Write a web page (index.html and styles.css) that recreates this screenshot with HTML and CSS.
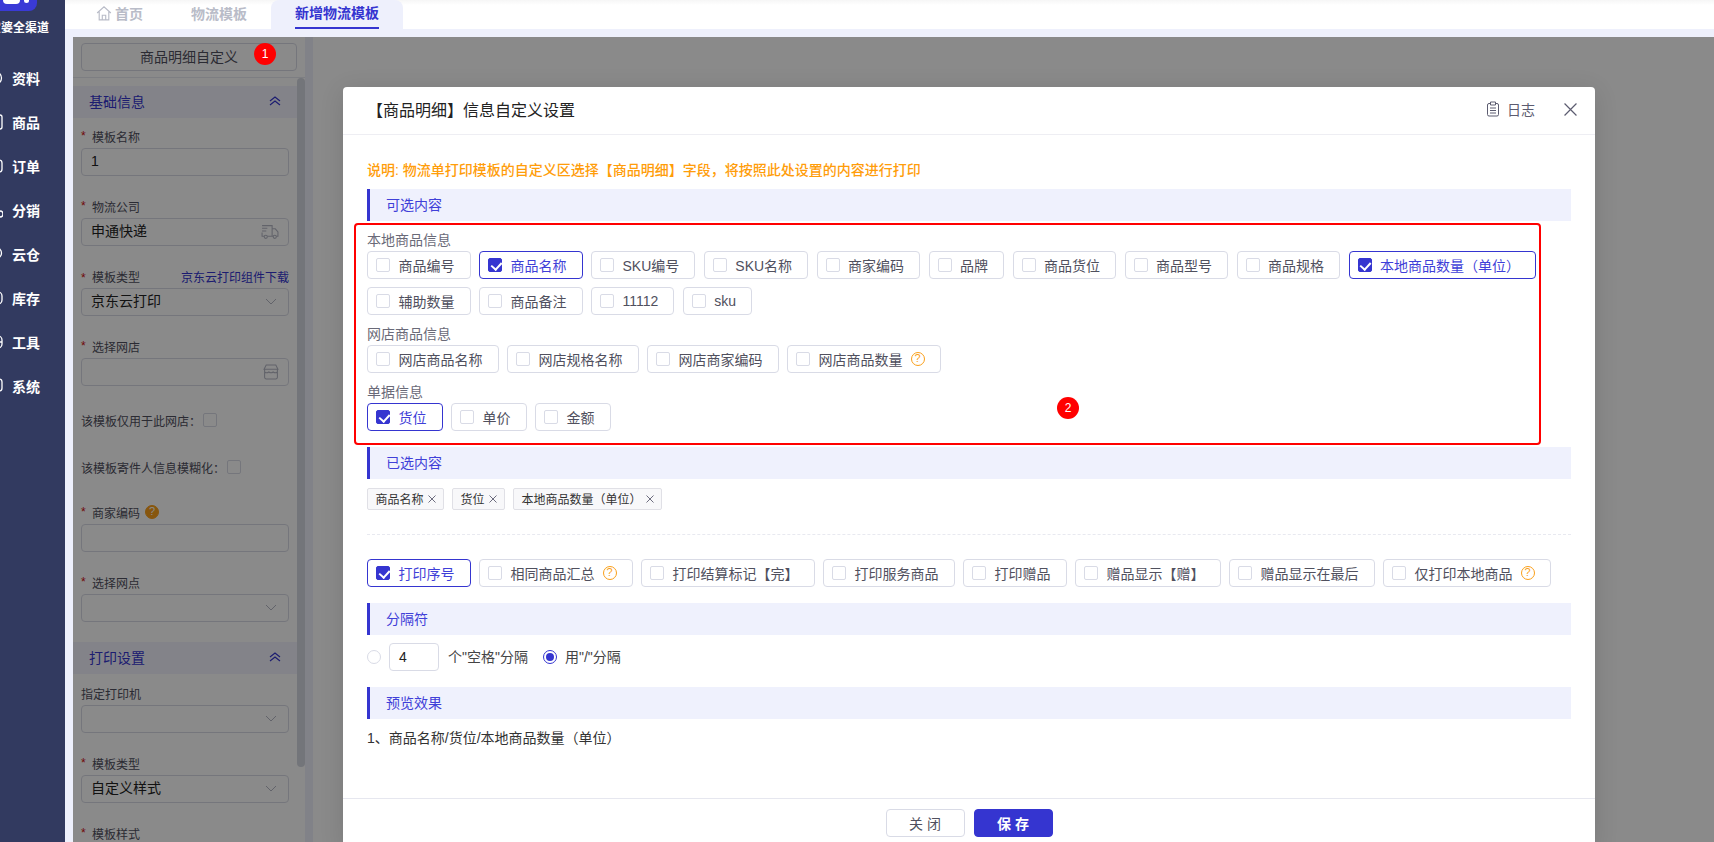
FILE: index.html
```html
<!DOCTYPE html>
<html lang="zh-CN">
<head>
    <meta charset="UTF-8">
    <title>新增物流模板</title>
    <link rel="stylesheet" href="styles.css">
</head>
<body>
<aside class="sidebar">
    <div class="logo">
        <div class="logo-mark"><i class="logo-blob"></i><i class="logo-dot"></i></div>
        <div class="logo-text">宝婆全渠道</div>
    </div>
    <nav class="nav">
        <a class="nav-item"><svg width="16" height="16" viewBox="0 0 16 16"><circle cx="8" cy="8" r="6.5"/></svg>资料</a>
        <a class="nav-item"><svg width="16" height="16" viewBox="0 0 16 16"><rect x="1" y="1" width="14" height="14" rx="2"/></svg>商品</a>
        <a class="nav-item"><svg width="16" height="16" viewBox="0 0 16 16"><rect x="1" y="2" width="14" height="12" rx="3"/></svg>订单</a>
        <a class="nav-item"><svg width="16" height="16" viewBox="0 0 16 16"><circle cx="13" cy="12" r="3"/></svg>分销</a>
        <a class="nav-item"><svg width="16" height="16" viewBox="0 0 16 16"><circle cx="9" cy="7" r="5.5"/></svg>云仓</a>
        <a class="nav-item"><svg width="16" height="16" viewBox="0 0 16 16"><rect x="1" y="2" width="14" height="12" rx="4"/></svg>库存</a>
        <a class="nav-item"><svg width="16" height="16" viewBox="0 0 16 16"><rect x="1" y="2" width="14" height="12" rx="4"/><path d="M9 8h6"/></svg>工具</a>
        <a class="nav-item"><svg width="16" height="16" viewBox="0 0 16 16"><rect x="1" y="1" width="14" height="12" rx="3"/></svg>系统</a>
    </nav>
</aside>

<div class="main">
    <div class="tabs">
        <a class="tab">
            <svg class="home-icon" width="16" height="16" viewBox="0 0 14 14"><path d="M1 7 7 1.500 13 7M2.800 6v7h8.400V6M5.500 13V9h3v4"/></svg>首页
        </a>
        <a class="tab">物流模板</a>
        <a class="tab active"><span>新增物流模板</span></a>
    </div>

    <div class="content">
        <div class="left-panel">
            <div class="panel-head">
                <button class="panel-button">商品明细自定义</button>
            </div>
            <div class="panel-body">
                <div class="form">
                    <div class="form-section">基础信息
                        <svg width="12" height="10" viewBox="0 0 12 10"><path d="M1 5 6 1l5 4M1 9l5-4 5 4"/></svg>
                    </div>
                    <div class="field">
                        <div class="field-label"><em>*</em>模板名称</div>
                        <div class="input">1</div>
                    </div>
                    <div class="field">
                        <div class="field-label"><em>*</em>物流公司</div>
                        <div class="input">申通快递
                            <svg class="input-icon" width="18" height="16" viewBox="0 0 17 15"><path d="M1 1.500h9.500v10H6M3 11.500H1V8M1 4h5M1 6.500h4M10.500 4.500h3l2.500 3v4h-1.500M11 11.500h.5"/><circle cx="4.500" cy="12" r="1.500"/><circle cx="13" cy="12" r="1.500"/></svg>
                        </div>
                    </div>
                    <div class="field">
                        <div class="field-label field-label-split">
                            <span><em>*</em>模板类型</span><a>京东云打印组件下载</a>
                        </div>
                        <div class="input">京东云打印
                            <svg class="input-icon arrow" width="12" height="7" viewBox="0 0 12 7"><path d="m1 1 5 5 5-5"/></svg>
                        </div>
                    </div>
                    <div class="field">
                        <div class="field-label"><em>*</em>选择网店</div>
                        <div class="input">
                            <svg class="input-icon shop" width="16" height="16" viewBox="0 0 15 15"><path d="M3 1h9l2 4H1zM1.500 5v7.500A1.500 1.500 0 0 0 3 14h9a1.500 1.500 0 0 0 1.500-1.500V5M1.500 7.500q2 1.500 4 0 2 1.500 4 0 2 1.500 4 0"/></svg>
                        </div>
                    </div>
                    <div class="check-field">该模板仅用于此网店：<i class="box"></i></div>
                    <div class="check-field">该模板寄件人信息模糊化：<i class="box"></i></div>
                    <div class="field">
                        <div class="field-label"><em>*</em>商家编码<i class="help filled">?</i></div>
                        <div class="input"></div>
                    </div>
                    <div class="field">
                        <div class="field-label"><em>*</em>选择网点</div>
                        <div class="input">
                            <svg class="input-icon arrow" width="12" height="7" viewBox="0 0 12 7"><path d="m1 1 5 5 5-5"/></svg>
                        </div>
                    </div>
                    <div class="form-section form-section-second">打印设置
                        <svg width="12" height="10" viewBox="0 0 12 10"><path d="M1 5 6 1l5 4M1 9l5-4 5 4"/></svg>
                    </div>
                    <div class="field">
                        <div class="field-label">指定打印机</div>
                        <div class="input">
                            <svg class="input-icon arrow" width="12" height="7" viewBox="0 0 12 7"><path d="m1 1 5 5 5-5"/></svg>
                        </div>
                    </div>
                    <div class="field">
                        <div class="field-label"><em>*</em>模板类型</div>
                        <div class="input">自定义样式
                            <svg class="input-icon arrow" width="12" height="7" viewBox="0 0 12 7"><path d="m1 1 5 5 5-5"/></svg>
                        </div>
                    </div>
                    <div class="field">
                        <div class="field-label"><em>*</em>模板样式</div>
                    </div>
                </div>
                <div class="scroll-thumb"></div>
            </div>
        </div>
        <div class="page-blank"></div>

        <div class="overlay">
            <div class="dialog">
                <div class="dialog-head">
                    <div class="dialog-title">【商品明细】信息自定义设置</div>
                    <a class="log-link">
                        <svg width="14" height="16" viewBox="0 0 14 16"><path d="M4.500 2.500H3A1.500 1.500 0 0 0 1.500 4v9.500A1.500 1.500 0 0 0 3 15h8a1.500 1.500 0 0 0 1.500-1.500V4A1.500 1.500 0 0 0 11 2.500H9.500M4.500 1h5v3h-5zM4 7h6M4 9.500h6M4 12h6"/></svg>日志
                    </a>
                    <svg class="close-icon" width="13" height="13" viewBox="0 0 12 12"><path d="m.5.5 11 11M11.500.5l-11 11"/></svg>
                </div>

                <div class="dialog-body">
                    <div class="notice">说明: 物流单打印模板的自定义区选择【商品明细】字段，将按照此处设置的内容进行打印</div>

                    <div class="section">可选内容</div>
                    <div class="groups">
                        <div class="group">
                            <div class="group-label">本地商品信息</div>
                            <div class="chips">
                                <label class="chip"><i class="box"></i>商品编号</label>
                                <label class="chip checked"><i class="box"></i>商品名称</label>
                                <label class="chip"><i class="box"></i>SKU编号</label>
                                <label class="chip"><i class="box"></i>SKU名称</label>
                                <label class="chip"><i class="box"></i>商家编码</label>
                                <label class="chip"><i class="box"></i>品牌</label>
                                <label class="chip"><i class="box"></i>商品货位</label>
                                <label class="chip"><i class="box"></i>商品型号</label>
                                <label class="chip"><i class="box"></i>商品规格</label>
                                <label class="chip checked"><i class="box"></i>本地商品数量（单位）</label>
                                <label class="chip"><i class="box"></i>辅助数量</label>
                                <label class="chip"><i class="box"></i>商品备注</label>
                                <label class="chip"><i class="box"></i>11112</label>
                                <label class="chip"><i class="box"></i>sku</label>
                            </div>
                        </div>
                        <div class="group">
                            <div class="group-label">网店商品信息</div>
                            <div class="chips">
                                <label class="chip"><i class="box"></i>网店商品名称</label>
                                <label class="chip"><i class="box"></i>网店规格名称</label>
                                <label class="chip"><i class="box"></i>网店商家编码</label>
                                <label class="chip"><i class="box"></i>网店商品数量<i class="help">?</i></label>
                            </div>
                        </div>
                        <div class="group">
                            <div class="group-label">单据信息</div>
                            <div class="chips">
                                <label class="chip checked"><i class="box"></i>货位</label>
                                <label class="chip"><i class="box"></i>单价</label>
                                <label class="chip"><i class="box"></i>金额</label>
                            </div>
                        </div>
                    </div>

                    <div class="section">已选内容</div>
                    <div class="tags">
                        <span class="tag">商品名称<svg width="8" height="8" viewBox="0 0 8 8"><path d="m.5.5 7 7M7.500.5l-7 7"/></svg></span>
                        <span class="tag">货位<svg width="8" height="8" viewBox="0 0 8 8"><path d="m.5.5 7 7M7.500.5l-7 7"/></svg></span>
                        <span class="tag">本地商品数量（单位）<svg width="8" height="8" viewBox="0 0 8 8"><path d="m.5.5 7 7M7.500.5l-7 7"/></svg></span>
                    </div>

                    <div class="dash-line"></div>

                    <div class="chips options">
                        <label class="chip checked"><i class="box"></i>打印序号</label>
                        <label class="chip"><i class="box"></i>相同商品汇总<i class="help">?</i></label>
                        <label class="chip"><i class="box"></i>打印结算标记【完】</label>
                        <label class="chip"><i class="box"></i>打印服务商品</label>
                        <label class="chip"><i class="box"></i>打印赠品</label>
                        <label class="chip"><i class="box"></i>赠品显示【赠】</label>
                        <label class="chip"><i class="box"></i>赠品显示在最后</label>
                        <label class="chip"><i class="box"></i>仅打印本地商品<i class="help">?</i></label>
                    </div>

                    <div class="section">分隔符</div>
                    <div class="separator-row">
                        <i class="radio"></i>
                        <div class="num-input">4</div>
                        <span class="separator-text">个"空格"分隔</span>
                        <i class="radio on"></i>
                        <span>用"/"分隔</span>
                    </div>

                    <div class="section">预览效果</div>
                    <div class="preview">1、商品名称/货位/本地商品数量（单位）</div>
                </div>

                <div class="dialog-foot">
                    <button class="btn">关 闭</button>
                    <button class="btn btn-primary">保 存</button>
                </div>
            </div>
        </div>
    </div>
</div>

<div class="red-box"></div>
<div class="step step-one">1</div>
<div class="step step-two">2</div>
</body>
</html>
```

FILE: styles.css
```css
* {
    box-sizing: border-box;
}

html, body {
    margin: 0;
    height: 100%;
    overflow: hidden;
}

body {
    display: flex;
    font-family: "Liberation Sans", "Noto Sans CJK SC", sans-serif;
    font-size: 14px;
    color: #50505e;
    background-color: #fff;
}

i, em {
    font-style: normal;
}

/* sidebar */
.sidebar {
    width: 65px;
    flex-shrink: 0;
    background-color: #323a60;
    overflow: hidden;
    color: #fff;
}

.logo {
    height: 56px;
}

.logo-mark {
    position: relative;
    width: 37px;
    height: 11px;
    background-color: #3a3ad6;
    border-radius: 0 0 8px 0;
}

.logo-blob {
    position: absolute;
    left: 3px;
    top: 0;
    width: 17px;
    height: 4px;
    background-color: #fff;
    border-radius: 0 0 8px 8px;
}

.logo-dot {
    position: absolute;
    left: 24px;
    top: 0;
    width: 5px;
    height: 3px;
    background-color: #fff;
    border-radius: 0 0 3px 3px;
}

.logo-text {
    width: 49px;
    margin-top: 8px;
    font-size: 12px;
    font-weight: bold;
    line-height: 18px;
    white-space: nowrap;
    direction: rtl;
}

.nav-item {
    display: flex;
    align-items: center;
    gap: 9px;
    height: 44px;
    margin-left: -13px;
    font-weight: bold;
}

.nav-item svg {
    fill: none;
    stroke: #fff;
    stroke-width: 1.3;
}

/* top tabs */
.main {
    flex: 1;
    min-width: 0;
    display: flex;
    flex-direction: column;
}

.tabs {
    display: flex;
    height: 29px;
    flex-shrink: 0;
    padding-left: 8px;
    background: linear-gradient(#f6f6f6, #fff 5px);
}

.tab {
    display: flex;
    align-items: center;
    gap: 3px;
    padding: 0 24px 4px;
    font-weight: bold;
    color: #b9bcc8;
}

.home-icon {
    margin-left: -1px;
    fill: none;
    stroke: #b9bcc8;
    stroke-width: 1;
}

.tab.active {
    padding-bottom: 0;
    color: #3535d0;
    background-color: #eef0fc;
    border-radius: 8px 8px 0 0;
}

.tab.active span {
    height: 100%;
    padding-top: 3px;
    border-bottom: 2px solid #3535d0;
    line-height: 20px;
}

/* page behind the dialog */
.content {
    position: relative;
    flex: 1;
    min-height: 0;
    display: flex;
    padding: 8px 0 0 8px;
    background-color: #eef0fc;
}

.left-panel {
    width: 232px;
    flex-shrink: 0;
    display: flex;
    flex-direction: column;
    background-color: #fff;
}

.panel-head {
    height: 41px;
    flex-shrink: 0;
    padding: 6px 8px;
    border-bottom: 1px solid #e8e9f0;
}

.panel-button {
    display: block;
    width: 216px;
    height: 28px;
    padding: 0 0 2px;
    font: inherit;
    color: #50505e;
    background-color: #fff;
    border: 1px solid #d9dbe6;
    border-radius: 4px;
}

.panel-body {
    flex: 1;
    min-height: 0;
    display: flex;
    overflow: hidden;
}

.form {
    width: 224px;
    flex-shrink: 0;
    padding-top: 8px;
}

.form-section {
    display: flex;
    align-items: center;
    justify-content: space-between;
    height: 32px;
    margin-bottom: 8px;
    padding: 0 16px 2px 16px;
    color: #3535d0;
    background-color: #f2f3fd;
}

.form-section svg {
    fill: none;
    stroke: #3535d0;
    stroke-width: 1.2;
}

.form-section-second {
    margin-bottom: 9px;
}

.field {
    padding: 0 8px 20px;
}

.field-label {
    display: flex;
    align-items: center;
    height: 22px;
    padding-bottom: 2px;
    font-size: 12px;
    color: #50505e;
}

.field-label em {
    display: inline-block;
    width: 11px;
    color: #d01010;
}

.field-label-split {
    justify-content: space-between;
}

.field-label-split a {
    color: #3535d0;
}

.input {
    position: relative;
    height: 28px;
    padding-left: 9px;
    line-height: 25px;
    color: #222;
    border: 1px solid #d9dbe6;
    border-radius: 4px;
}

.input-icon {
    position: absolute;
    right: 9px;
    top: 5px;
    fill: none;
    stroke: #b5b7c4;
    stroke-width: 1;
}

.input-icon.arrow {
    top: 9px;
    right: 11px;
}

.input-icon.shop {
    top: 5px;
}

.check-field {
    display: flex;
    align-items: center;
    height: 22px;
    margin: 3px 8px 25px;
    font-size: 12px;
}

.check-field + .check-field {
    margin-top: 0;
    margin-bottom: 24px;
}

.check-field .box {
    margin-left: 2px;
}

.scroll-thumb {
    width: 8px;
    height: 689px;
    background-color: #d5d8e2;
    border-radius: 4px;
}

.page-blank {
    flex: 1;
    margin-left: 8px;
    background-color: #fff;
}

/* dialog */
.overlay {
    position: absolute;
    left: 8px;
    top: 8px;
    right: 0;
    bottom: 0;
    background-color: rgba(0, 0, 0, 0.46);
}

.dialog {
    position: absolute;
    left: 270px;
    top: 50px;
    width: 1252px;
    height: 761px;
    display: flex;
    flex-direction: column;
    background-color: #fff;
    border-radius: 4px;
    box-shadow: 0 4px 24px rgba(0, 0, 0, 0.12);
}

.dialog-head {
    display: flex;
    align-items: center;
    height: 48px;
    flex-shrink: 0;
    padding: 0 18px 3px 24px;
    border-bottom: 1px solid #eeeef3;
}

.dialog-title {
    flex: 1;
    font-size: 16px;
    color: #222;
}

.log-link {
    display: flex;
    align-items: center;
    gap: 7px;
    margin-right: 29px;
    color: #5c5c70;
}

.log-link svg {
    fill: none;
    stroke: #5c5c70;
    stroke-width: 1;
}

.close-icon {
    fill: none;
    stroke: #5c5c70;
    stroke-width: 1.1;
}

.dialog-body {
    flex: 1;
    min-height: 0;
    padding: 25px 24px 0;
}

.notice {
    height: 20px;
    margin-bottom: 9px;
    line-height: 20px;
    font-weight: 500;
    color: #ff9d0a;
}

.section {
    height: 32px;
    padding-left: 16px;
    line-height: 32px;
    color: #4040d8;
    background-color: #eff1fd;
    border-left: 3px solid #3535d0;
}

.groups {
    padding-top: 9px;
    margin-bottom: 16px;
}

.group + .group {
    margin-top: 9px;
}

.group-label {
    height: 20px;
    margin-bottom: 1px;
    line-height: 20px;
    color: #6a6a78;
}

.chips {
    display: flex;
    flex-wrap: wrap;
    gap: 8px 8.5px;
}

.chip {
    display: flex;
    align-items: center;
    height: 28px;
    padding: 0 15px 1px 8px;
    background-color: #fff;
    border: 1px solid #d9dbe6;
    border-radius: 4px;
    white-space: nowrap;
}

.chip .box {
    margin-right: 8.5px;
}

.box {
    position: relative;
    display: block;
    width: 14px;
    height: 14px;
    flex-shrink: 0;
    border: 1px solid #d9dbe6;
    border-radius: 2px;
}

.chip .box,
.chip .help {
    top: 0.5px;
}

.chip.checked {
    color: #3f3fd8;
    border-color: #3535d0;
}

.chip.checked .box {
    background-color: #3535d0;
    border-color: #3535d0;
}

.chip.checked .box::after {
    content: "";
    position: absolute;
    left: 3.5px;
    top: 1px;
    width: 5px;
    height: 8px;
    border: solid #fff;
    border-width: 0 2px 2px 0;
    transform: rotate(42deg);
}

.help {
    position: relative;
    display: block;
    width: 14px;
    height: 14px;
    margin-left: 8px;
    font-size: 11px;
    line-height: 11px;
    text-align: center;
    color: #fa9f1a;
    border: 1.5px solid #fa9f1a;
    border-radius: 50%;
}

.help.filled {
    margin-left: 5px;
    color: #fff;
    background-color: #fa9f1a;
}

.tags {
    display: flex;
    gap: 8px;
    margin-top: 9px;
}

.tag {
    display: flex;
    align-items: center;
    gap: 4px;
    height: 22px;
    padding: 0 7.5px 1px;
    font-size: 12px;
    color: #333;
    background-color: #f8f8fa;
    border: 1px solid #e0e0e6;
    border-radius: 2px;
}

.tag svg {
    fill: none;
    stroke: #5c5c70;
    stroke-width: 0.9;
}

.dash-line {
    margin: 24px 0;
    border-top: 1px dashed #e8e9f0;
}

.options {
    margin-bottom: 16px;
}

.separator-row {
    display: flex;
    align-items: center;
    height: 28px;
    margin: 8px 0 16px;
    line-height: 26px;
    color: #444;
}

.separator-row span {
    padding-bottom: 1px;
}

.radio {
    position: relative;
    display: block;
    width: 14px;
    height: 14px;
    margin-right: 8px;
    border: 1px solid #d9dbe6;
    border-radius: 50%;
}

.radio.on {
    border-color: #3535d0;
}

.radio.on::after {
    content: "";
    position: absolute;
    left: 2px;
    top: 2px;
    width: 8px;
    height: 8px;
    background-color: #3535d0;
    border-radius: 50%;
}

.num-input {
    width: 50px;
    height: 28px;
    margin-right: 9px;
    padding-left: 9px;
    line-height: 26px;
    color: #222;
    border: 1px solid #d9dbe6;
    border-radius: 4px;
}

.separator-text {
    margin-right: 15px;
}

.preview {
    height: 20px;
    margin-top: 9px;
    line-height: 20px;
    color: #333;
}

.dialog-foot {
    display: flex;
    justify-content: center;
    gap: 9px;
    height: 50px;
    flex-shrink: 0;
    padding-top: 10px;
    border-top: 1px solid #e6e7ef;
}

.btn {
    width: 79px;
    height: 28px;
    padding: 0 0 1px;
    font: inherit;
    color: #50505e;
    background-color: #fff;
    border: 1px solid #d9dbe6;
    border-radius: 4px;
}

.btn-primary {
    font-weight: bold;
    color: #fff;
    background-color: #3535d0;
    border-color: #3535d0;
}

/* annotations drawn over the whole page */
.red-box {
    position: absolute;
    left: 354px;
    top: 223px;
    width: 1187px;
    height: 222px;
    border: 2px solid #f00;
    border-radius: 4px;
}

.step {
    position: absolute;
    width: 22px;
    height: 22px;
    font-size: 12px;
    line-height: 22px;
    text-align: center;
    color: #fff;
    background-color: #f00;
    border-radius: 50%;
}

.step-one {
    left: 254px;
    top: 43px;
}

.step-two {
    left: 1057px;
    top: 397px;
}
```
